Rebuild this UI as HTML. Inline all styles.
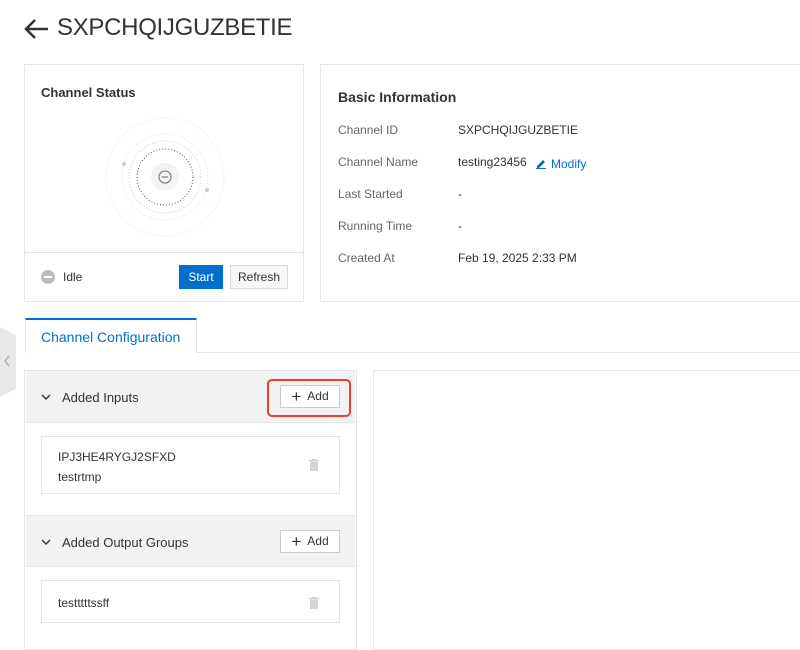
<!DOCTYPE html>
<html><head><style>
*{box-sizing:border-box;margin:0;padding:0}
body{width:800px;height:640px;overflow:hidden;background:#fff;font-family:"Liberation Sans",sans-serif;color:#333;position:relative}
.abs{position:absolute}
.card{position:absolute;border:1px solid #e5e5e5;background:#fff}
.lbl{position:absolute;left:17px;font-size:12px;color:#666}
.val{position:absolute;left:137px;font-size:12px;color:#333}
.btn{position:absolute;font-size:12px;height:24px;line-height:22px;text-align:center}
.hdr{position:absolute;left:1px;right:1px;background:#f2f2f2;height:52px;border-bottom:1px solid #e5e5e5}
.hdr .t{position:absolute;left:36px;top:19px;font-size:13px;color:#333}
.chev{position:absolute;left:15px;top:21px;width:10px;height:10px}
.add{position:absolute;right:15px;top:14px;width:60px;height:23px;border:1px solid #ccc;background:#fff;font-size:12px;line-height:21px;text-align:center;color:#333}
.add b{font-weight:normal;font-size:17px;vertical-align:-2px;margin-right:6px}
.item{position:absolute;left:16px;width:299px;border:1px solid #e5e5e5;background:#fff;font-size:12px}
.trash{position:absolute;right:20px;width:10px;height:12px}
</style></head><body>
<svg class="abs" style="left:24px;top:18px" width="26" height="22" viewBox="0 0 26 22"><path d="M2 11H24M11 2L2 11L11 20" stroke="#333" stroke-width="2.6" fill="none"/></svg>
<div class="abs" style="left:57px;top:14px;font-size:24px;color:#333;letter-spacing:-0.3px">SXPCHQIJGUZBETIE</div>

<div class="card" style="left:24px;top:64px;width:280px;height:238px">
 <div class="abs" style="left:16px;top:20px;font-size:13px;font-weight:bold;color:#333">Channel Status</div>
 <svg class="abs" style="left:80px;top:52px" width="120" height="120" viewBox="0 0 120 120">
  <circle cx="60" cy="60" r="59" fill="none" stroke="#e6e6e6" stroke-dasharray="1 2"/>
  <circle cx="60" cy="60" r="43" fill="none" stroke="#e0e0e0" stroke-dasharray="1 2"/>
  <circle cx="60" cy="60" r="36" fill="none" stroke="#ccc" stroke-dasharray="1 2"/>
  <circle cx="60" cy="60" r="28" fill="none" stroke="#555" stroke-dasharray="1 2"/>
  <circle cx="60" cy="60" r="14" fill="#f3f3f3"/>
  <circle cx="60" cy="60" r="6" fill="none" stroke="#888" stroke-width="1.3"/>
  <path d="M57 60H63" stroke="#888" stroke-width="1.3"/>
  <circle cx="19" cy="47" r="2" fill="#ccc"/><circle cx="102" cy="73" r="2" fill="#ccc"/>
 </svg>
 <div class="abs" style="left:0;right:0;top:187px;border-top:1px solid #e5e5e5"></div>
 <div class="abs" style="left:16px;top:205px;width:14px;height:14px;border-radius:50%;background:#bbb"><div style="position:absolute;left:3px;top:6px;width:8px;height:2px;background:#fff"></div></div>
 <div class="abs" style="left:38px;top:205px;font-size:12px">Idle</div>
 <div class="btn" style="left:154px;top:200px;width:44px;background:#0070cc;color:#fff;border:1px solid #0070cc">Start</div>
 <div class="btn" style="left:205px;top:200px;width:58px;background:#f7f7f7;color:#333;border:1px solid #d9d9d9">Refresh</div>
</div>

<div class="card" style="left:320px;top:64px;width:490px;height:238px">
 <div class="abs" style="left:17px;top:24px;font-size:14px;font-weight:bold;color:#333">Basic Information</div>
 <div class="lbl" style="top:58px">Channel ID</div><div class="val" style="top:58px">SXPCHQIJGUZBETIE</div>
 <div class="lbl" style="top:90px">Channel Name</div><div class="val" style="top:90px">testing23456</div>
 <svg class="abs" style="left:214px;top:92px" width="12" height="12" viewBox="0 0 12 12"><path d="M2 9L8 3L10 5L4 11H2Z" fill="#0070cc"/><path d="M1 11.5H11" stroke="#0070cc"/></svg>
 <div class="abs" style="left:230px;top:92px;font-size:12px;color:#0070cc">Modify</div>
 <div class="lbl" style="top:122px">Last Started</div><div class="val" style="top:122px">-</div>
 <div class="lbl" style="top:154px">Running Time</div><div class="val" style="top:154px">-</div>
 <div class="lbl" style="top:186px">Created At</div><div class="val" style="top:186px">Feb 19, 2025 2:33 PM</div>
</div>

<div class="abs" style="left:0;top:327px;width:16px;height:70px;background:#e8e8e8;clip-path:polygon(0 0,100% 12%,100% 88%,0 100%)"></div>
<svg class="abs" style="left:3px;top:354px" width="8" height="14"><path d="M6 2L2 7L6 12" stroke="#aaa" fill="none" stroke-width="1.3"/></svg>

<div class="abs" style="left:196px;right:0;top:352px;border-top:1px solid #e5e5e5"></div>
<div class="abs" style="left:25px;top:318px;width:172px;height:35px;border:1px solid #e5e5e5;border-top:2px solid #0070cc;border-bottom:none;background:#fff;font-size:14px;color:#0070cc;padding:9px 0 0 15px">Channel Configuration</div>

<div class="card" style="left:24px;top:370px;width:333px;height:280px;background:#fff">
 <div class="hdr" style="top:0">
  <svg class="chev" viewBox="0 0 10 10"><path d="M1 3L5 7L9 3" stroke="#333" stroke-width="1.4" fill="none"/></svg>
  <div class="t">Added Inputs</div><div class="add"><b>+</b>Add</div>
 </div>
 <div class="abs" style="left:242px;top:8px;width:84px;height:38px;border:2px solid #e8412c;border-radius:5px"></div>
 <div class="item" style="top:65px;height:58px">
  <div class="abs" style="left:16px;top:13px;color:#333">IPJ3HE4RYGJ2SFXD</div>
  <div class="abs" style="left:16px;top:33px;color:#333">testrtmp</div>
  <svg class="trash" style="top:22px" viewBox="0 0 10 12"><rect x="0" y="1" width="10" height="1.5" fill="#ccc"/><rect x="3" y="0" width="4" height="1.5" fill="#ccc"/><rect x="1" y="3" width="8" height="9" fill="#d5d5d5"/></svg>
 </div>
 <div class="hdr" style="top:144px;border-top:1px solid #e5e5e5">
  <svg class="chev" viewBox="0 0 10 10"><path d="M1 3L5 7L9 3" stroke="#333" stroke-width="1.4" fill="none"/></svg>
  <div class="t">Added Output Groups</div><div class="add"><b>+</b>Add</div>
 </div>
 <div class="item" style="top:209px;height:43px">
  <div class="abs" style="left:16px;top:15px;color:#333">testttttssff</div>
  <svg class="trash" style="top:16px" viewBox="0 0 10 12"><rect x="0" y="1" width="10" height="1.5" fill="#ccc"/><rect x="3" y="0" width="4" height="1.5" fill="#ccc"/><rect x="1" y="3" width="8" height="9" fill="#d5d5d5"/></svg>
 </div>
</div>

<div class="card" style="left:373px;top:370px;width:440px;height:280px"></div>
</body></html>
